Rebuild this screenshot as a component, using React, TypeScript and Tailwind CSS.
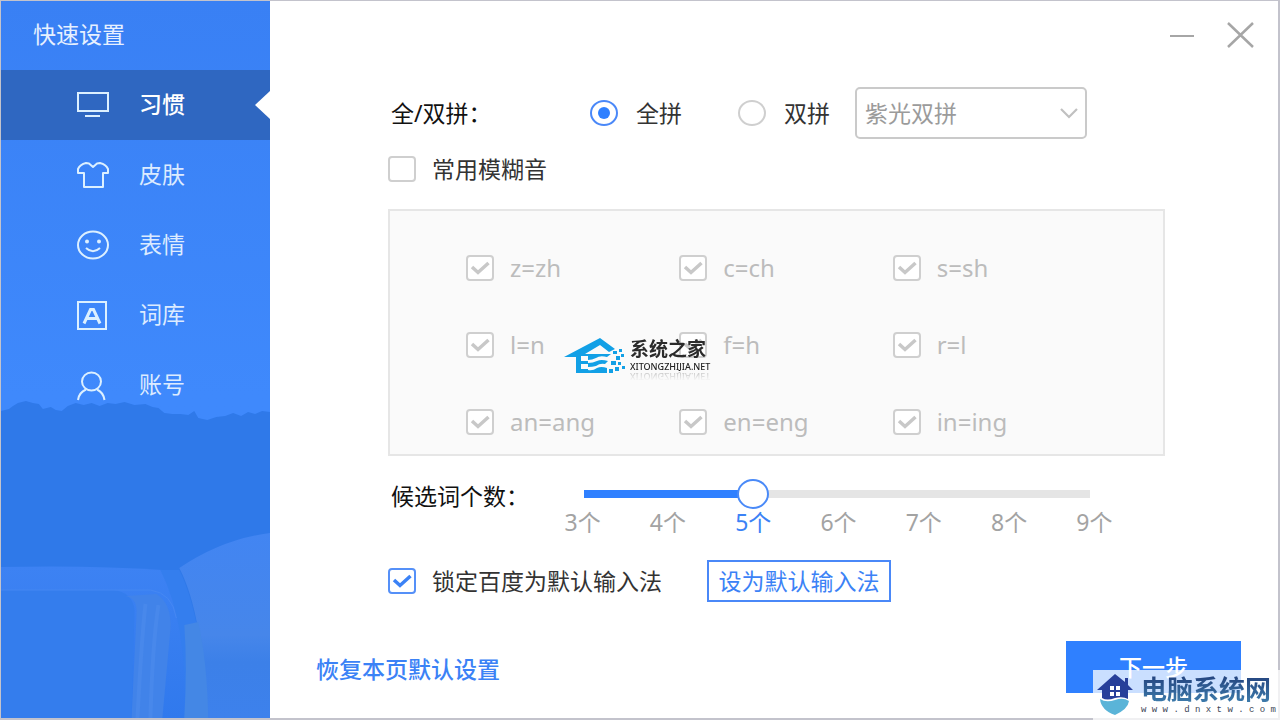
import { useState } from "react";
import type { ReactNode } from "react";

const iconProps = {
  width: 36,
  height: 32,
  viewBox: "0 0 36 32",
  fill: "none",
  stroke: "currentColor",
  strokeWidth: 2,
  "aria-hidden": true,
} as const;

const navItems: { label: string; icon: ReactNode }[] = [
  {
    label: "习惯",
    icon: (
      <svg {...iconProps}>
        <path d="M2 4H32V22H2ZM9 27H24" />
      </svg>
    ),
  },
  {
    label: "皮肤",
    icon: (
      <svg {...iconProps} strokeLinejoin="round">
        <path d="M10 4L13 4.500L17 8L21 4.500L24 4Q30 5.500 32 10V14H27V28H8V14H2V10Q4 5.500 10 4Z" />
      </svg>
    ),
  },
  {
    label: "表情",
    icon: (
      <svg {...iconProps}>
        <ellipse cx="17" cy="16" rx="15" ry="13.500" />
        <path d="M10 19Q17 25.500 24 19" />
        <circle cx="11" cy="12.500" r="2" fill="currentColor" stroke="none" />
        <circle cx="23" cy="12.500" r="2" fill="currentColor" stroke="none" />
      </svg>
    ),
  },
  {
    label: "词库",
    icon: (
      <svg {...iconProps}>
        <path d="M2 3H30V30H2Z" />
        <path d="M8 24.500L14.500 10.500H17.500L24 24.500M10.500 19.500H21.500" strokeWidth="3" />
      </svg>
    ),
  },
  {
    label: "账号",
    icon: (
      <svg {...iconProps}>
        <ellipse cx="15.500" cy="12.500" rx="9.500" ry="9" />
        <path d="M2 31Q3 23.500 10 20.500M21 20.500Q27.500 23.500 28.500 31" />
      </svg>
    ),
  },
];

const fuzzyPairs = ["z=zh", "c=ch", "s=sh", "l=n", "f=h", "r=l", "an=ang", "en=eng", "in=ing"];
const counts = [3, 4, 5, 6, 7, 8, 9];

function Check({
  id,
  label,
  defaultChecked,
  disabled,
}: {
  id: string;
  label: string;
  defaultChecked?: boolean;
  disabled?: boolean;
}) {
  return (
    <label
      htmlFor={id}
      className={disabled ? "flex h-9 items-center gap-4 text-2xl text-[#bcbcbc]" : "flex h-9 items-center gap-4 text-[#333]"}
    >
      <span className="grid place-items-center">
        <input
          id={id}
          type="checkbox"
          defaultChecked={defaultChecked}
          disabled={disabled}
          className="peer col-start-1 row-start-1 h-[26px] w-7 appearance-none rounded-[4px] border-2 border-[#cfcfcf] bg-white enabled:checked:border-[#5590f8]"
        />
        <svg
          width="22"
          height="18"
          viewBox="0 0 22 18"
          fill="none"
          strokeWidth="3.500"
          aria-hidden="true"
          className="pointer-events-none col-start-1 row-start-1 hidden stroke-[#3b82f6] peer-checked:block peer-disabled:stroke-[#c8c8c8]"
        >
          <path d="M3 8L9 13.500L19.500 4" />
        </svg>
      </span>
      {label}
    </label>
  );
}

function Radio({ id, label, defaultChecked }: { id: string; label: string; defaultChecked?: boolean }) {
  return (
    <label htmlFor={id} className="flex items-center gap-[18px] text-[#333]">
      <span className="grid place-items-center">
        <input
          id={id}
          type="radio"
          name="pinyin"
          defaultChecked={defaultChecked}
          className="peer col-start-1 row-start-1 h-[26px] w-7 appearance-none rounded-[50%] border-2 border-[#cfcfcf] bg-white checked:border-[#4a88f8]"
        />
        <span className="pointer-events-none col-start-1 row-start-1 hidden h-3 w-3 rounded-full bg-[#2f80ff] peer-checked:block" />
      </span>
      {label}
    </label>
  );
}

function Scenery() {
  return (
    <svg
      className="pointer-events-none absolute inset-x-0 bottom-0 h-[318px] w-full"
      viewBox="0 0 270 318"
      preserveAspectRatio="none"
      aria-hidden="true"
    >
      <defs>
        <linearGradient id="nose" x1="0" y1="0" x2="0" y2="1">
          <stop offset="0" stopColor="#4285f2" />
          <stop offset="0.550" stopColor="#4686ea" />
          <stop offset="0.700" stopColor="#3c80e8" />
          <stop offset="1" stopColor="#3d81ec" />
        </linearGradient>
        <linearGradient id="carriage" x1="0" y1="0" x2="0" y2="1">
          <stop offset="0" stopColor="#3d82f3" />
          <stop offset="1" stopColor="#3079ed" />
        </linearGradient>
      </defs>
      <path
        fill="#2f79e9"
        d="M0 11L8 9L12 6L17 3L25 1L32 3L38 4L42 9L50 7L55 10L61 11L67 6L75 3L83 5L91 3L99 6L107 3L115 4L124 2L134 5L145 4L152 7L158 8L164 13L172 14L180 14L188 15L194 11L198 18L207 20L216 17L225 16L233 13L241 16L248 12L255 14L262 11L270 12V318H0Z"
      />
      <path fill="url(#carriage)" d="M0 167Q90 165 162 170Q180 180 190 220L197 318H0Z" />
      <path fill="#347ded" d="M0 190H112Q132 192 134 210L131 318H0Z" />
      <path fill="none" stroke="#4588f3" strokeWidth="1" d="M0 190H150Q172 193 176 218" />
      <path fill="#4183e9" d="M125 196Q137 198 136 214L131 318H162L170 230Q172 204 156 194Z" />
      <path fill="none" stroke="#4888eb" strokeWidth="4" d="M145 204Q141 240 137 318M158 205Q152 245 150 318" />
      <path fill="url(#nose)" d="M179 168Q222 139 270 133V318H206Q203 214 179 168Z" />
      <path fill="#347eee" d="M160 170H179Q202 216 207 318H184Q188 225 160 170Z" />
      <path fill="#4487e5" d="M184 225L198 222Q207 262 208 318H184Q187 268 184 225Z" />
    </svg>
  );
}

function SiteMark() {
  return (
    <div className="pointer-events-none absolute left-[174px] top-[126px] flex items-start gap-1">
      <svg width="62" height="42" viewBox="0 0 62 42" aria-hidden="true">
        <path fill="#12a0e6" d="M0 20L36 1L51 12L45 15L36 8L21 17H47L43 20Q36 18 32 21Q28 23 24 23V26Q29 26 33 24Q37 22 44 24L41 27Q36 26 32 29Q28 30 24 30V33Q29 34 33 31Q37 29 43 31V36H12V20Z" />
        <path fill="#fafafa" d="M17 19H24V24H17ZM17 27H24V32H17Z" />
        <path
          fill="#12a0e6"
          d="M49 14h4v3h-4zM55 12h3v3h-3zM52 19h4v4h-4zM57 17h3v3h-3zM47 24h5v4h-5zM54 25h3v3h-3zM58 29h3v3h-3zM51 30h4v4h-4zM45 32h4v4h-4z"
        />
      </svg>
      <div className="flex flex-col [-webkit-box-reflect:below_-3px_linear-gradient(transparent_70%,rgba(0,0,0,0.3))]">
        <span className="text-[19px] font-bold leading-6 text-[#2b2b2b]">系统之家</span>
        <span className="whitespace-nowrap text-[9px] font-medium leading-3 text-[#222]">XITONGZHIJIA.NET</span>
      </div>
    </div>
  );
}

function CornerMark() {
  return (
    <div className="pointer-events-none absolute -bottom-0.5 -right-0.5 flex h-[50px] w-[187px] items-center gap-2 bg-white/75 pl-1">
      <svg width="36" height="44" viewBox="0 0 36 44" className="shrink-0" aria-hidden="true">
        <path fill="#273f9a" d="M18 1L28 9V5H31V12L36 17H31V26Q26 23 18 25Q10 28 5 25V17H0Z" />
        <path fill="#fff" d="M13 13h4v4h-4zM19 13h4v4h-4zM13 19h4v4h-4zM19 19h4v4h-4z" />
        <path fill="#5ab4d8" d="M3 26Q9 30 18 27Q26 24 32 28Q31 36 18 42Q4 37 3 26Z" />
      </svg>
      <div className="flex flex-col">
        <span className="bg-gradient-to-b from-[#23407c] to-[#3f7fae] bg-clip-text text-[26px] font-bold leading-[30px] text-transparent">
          电脑系统网
        </span>
        <span className="whitespace-pre font-['Liberation_Mono',monospace] text-[9px] leading-3 text-[#3c4656]">
          w w w . d n x t w . c o m
        </span>
      </div>
    </div>
  );
}

export default function App() {
  const [active, setActive] = useState(0);
  const [count, setCount] = useState(5);

  return (
    <div className="relative flex min-h-screen border border-b-2 border-r-2 border-[#c3c3cc] bg-white font-['Noto_Sans','Noto_Sans_CJK_SC',sans-serif] text-[23px] leading-8">
      <aside className="relative w-[269px] shrink-0 bg-gradient-to-b from-[#3980f4] to-[#3f89fc] to-55% text-[#dcebff]">
        <Scenery />
        <h1 className="flex h-[69px] items-center pb-1 pl-8 text-[#e6f0ff]">快速设置</h1>
        <nav className="relative">
          {navItems.map((item, i) => (
            <button
              key={item.label}
              type="button"
              onClick={() => setActive(i)}
              className={
                i === active
                  ? "relative flex h-[70px] w-full items-center gap-[27px] bg-[#2f67c1] pb-0.5 pl-[75px] font-medium text-white"
                  : "relative flex h-[70px] w-full items-center gap-[27px] pb-0.5 pl-[75px]"
              }
            >
              <span className="pt-0.5 text-[#dcf0ff]">{item.icon}</span>
              {item.label}
              {i === active && (
                <svg className="absolute right-0 top-[21px]" width="15" height="28" viewBox="0 0 15 28" aria-hidden="true">
                  <path d="M15 0V28L0 14Z" fill="#fff" />
                </svg>
              )}
            </button>
          ))}
        </nav>
      </aside>

      <main className="flex min-w-0 flex-1 flex-col">
        <header className="flex h-[69px] items-center justify-end gap-8 pb-0.5 pr-6">
          <button type="button" aria-label="最小化" className="text-[#a6a6a6]">
            <svg width="26" height="28" viewBox="0 0 26 28" stroke="currentColor" strokeWidth="2" aria-hidden="true">
              <path d="M1 15H25" />
            </svg>
          </button>
          <button type="button" aria-label="关闭" className="text-[#a6a6a6]">
            <svg width="27" height="26" viewBox="0 0 27 26" stroke="currentColor" strokeWidth="2.500" aria-hidden="true">
              <path d="M1 1L26 25M26 1L1 25" />
            </svg>
          </button>
        </header>

        <div className="pl-[118px] pr-[113px]">
          <div className="mt-[17px] flex h-[52px] items-center">
            <span className="w-[202px] pl-[3px] text-[#111]">全/双拼：</span>
            <Radio id="full" label="全拼" defaultChecked />
            <div className="w-14" />
            <Radio id="double" label="双拼" />
            <div className="relative ml-[25px] h-[52px] w-[232px]">
              <select
                aria-label="双拼方案"
                defaultValue="紫光双拼"
                className="h-full w-full appearance-none rounded-[5px] border-2 border-[#cacaca] bg-white pl-2 text-[#9b9b9b]"
              >
                <option>紫光双拼</option>
              </select>
              <svg
                className="pointer-events-none absolute right-2 top-5"
                width="20"
                height="14"
                viewBox="0 0 20 14"
                fill="none"
                stroke="#c0c0c0"
                strokeWidth="2.200"
                aria-hidden="true"
              >
                <path d="M2 2L10 10L18 2" />
              </svg>
            </div>
          </div>

          <div className="mt-3 flex">
            <Check id="fuzzy" label="常用模糊音" />
          </div>

          <div className="relative mt-[22px] grid grid-cols-3 gap-y-[41px] border-2 border-[#e6e6e6] bg-[#fafafa] pb-[14px] pl-[76px] pr-[57px] pt-[39px]">
            {fuzzyPairs.map((pair) => (
              <Check key={pair} id={pair} label={pair} defaultChecked disabled />
            ))}
            <SiteMark />
          </div>

          <div className="mt-[22px] flex items-start">
            <label htmlFor="count" className="w-[152px] shrink-0 pl-[3px] leading-9 text-[#111]">
              候选词个数：
            </label>
            <div className="w-[597px]">
              <div className="ml-7 grid w-[538px] items-center">
                <div className="col-start-1 row-start-1 mx-4 h-2 bg-[#e5e5e5]">
                  <div className="h-full bg-[#2f80ff]" style={{ width: `${((count - 3) / 6) * 100}%` }} />
                </div>
                <input
                  id="count"
                  type="range"
                  min={3}
                  max={9}
                  value={count}
                  onChange={(e) => setCount(Number(e.target.value))}
                  className="relative col-start-1 row-start-1 m-0 h-8 w-full appearance-none bg-transparent [&::-webkit-slider-thumb]:h-[30px] [&::-webkit-slider-thumb]:w-8 [&::-webkit-slider-thumb]:appearance-none [&::-webkit-slider-thumb]:rounded-[50%] [&::-webkit-slider-thumb]:border-2 [&::-webkit-slider-thumb]:border-solid [&::-webkit-slider-thumb]:border-[#4a8af8] [&::-webkit-slider-thumb]:bg-white"
                />
              </div>
              <div className="grid grid-cols-7 text-center leading-[25px] text-[#a3a3a3]">
                {counts.map((n) => (
                  <span key={n} className={n === count ? "text-[#3b82f6]" : undefined}>
                    {n}个
                  </span>
                ))}
              </div>
            </div>
          </div>

          <div className="mt-[25px] flex items-center">
            <div className="w-[319px]">
              <Check id="lock" label="锁定百度为默认输入法" defaultChecked />
            </div>
            <button type="button" className="h-[42px] w-[184px] border-2 border-[#4a88f8] bg-white text-[#3b82f6]">
              设为默认输入法
            </button>
          </div>
        </div>

        <footer className="mt-auto flex items-center justify-between pb-[25px] pl-[46px] pr-[37px] font-medium">
          <a href="#reset" className="pt-1 text-[#3b82f6]">
            恢复本页默认设置
          </a>
          <button type="button" className="h-[52px] w-[175px] bg-[#2f80ff] text-white">
            下一步
          </button>
        </footer>
      </main>

      <CornerMark />
    </div>
  );
}
